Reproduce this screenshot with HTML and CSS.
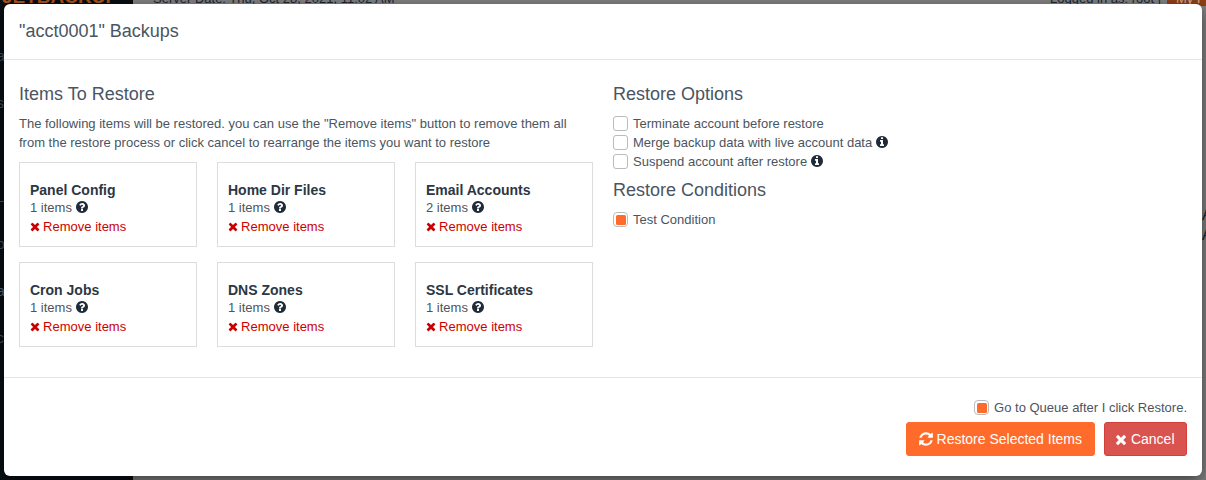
FILE: index.html
```html
<!DOCTYPE html>
<html lang="en">
<head>
<meta charset="utf-8">
<title>Backups</title>
<link rel="stylesheet" href="styles.css">
</head>
<body>
<svg class="defs" width="0" height="0" aria-hidden="true">
  <symbol id="i-times" viewBox="0 0 1408 1792"><path d="M1298 1322q0 40-28 68l-136 136q-28 28-68 28t-68-28l-294-294-294 294q-28 28-68 28t-68-28l-136-136q-28-28-28-68t28-68l294-294-294-294q-28-28-28-68t28-68l136-136q28-28 68-28t68 28l294 294 294-294q28-28 68-28t68 28l136 136q28 28 28 68t-28 68l-294 294 294 294q28 28 28 68z"/></symbol>
  <symbol id="i-question" viewBox="0 0 1792 1792"><path d="M1024 1376v-192q0-14-9-23t-23-9h-192q-14 0-23 9t-9 23v192q0 14 9 23t23 9h192q14 0 23-9t9-23zm256-672q0-88-55.500-163t-138.500-116-170-41q-243 0-371 213-15 24 8 42l132 100q7 6 19 6 16 0 25-12 53-68 86-92 34-24 86-24 48 0 85.500 26t37.500 59q0 38-20 61t-68 45q-63 28-115.500 86.500t-52.500 125.500v36q0 14 9 23t23 9h192q14 0 23-9t9-23q0-19 21.500-49.500t54.500-49.500q32-18 49-28.500t46-35 44.500-48 28-60.500 12.500-81zm384 192q0 209-103 385.500t-279.500 279.500-385.500 103-385.500-103-279.500-279.500-103-385.500 103-385.500 279.500-279.500 385.500-103 385.500 103 279.500 279.500 103 385.500z"/></symbol>
  <symbol id="i-info" viewBox="0 0 1792 1792"><path d="M1152 1376v-160q0-14-9-23t-23-9h-96v-512q0-14-9-23t-23-9h-320q-14 0-23 9t-9 23v160q0 14 9 23t23 9h96v320h-96q-14 0-23 9t-9 23v160q0 14 9 23t23 9h448q14 0 23-9t9-23zm-128-896v-160q0-14-9-23t-23-9h-192q-14 0-23 9t-9 23v160q0 14 9 23t23 9h192q14 0 23-9t9-23zm640 416q0 209-103 385.500t-279.500 279.500-385.500 103-385.500-103-279.500-279.500-103-385.500 103-385.500 279.500-279.500 385.500-103 385.500 103 279.500 279.500 103 385.500z"/></symbol>
  <symbol id="i-refresh" viewBox="0 0 1792 1792"><path d="M1639 1056q0 5-1 7-64 268-268 434.500t-478 166.500q-146 0-282.500-55t-243.500-157l-129 129q-19 19-45 19t-45-19-19-45v-448q0-26 19-45t45-19h448q26 0 45 19t19 45-19 45l-137 137q71 66 161 102t187 36q134 0 250-65t186-179q11-17 53-117 8-23 30-23h192q13 0 22.500 9.500t9.500 22.500zm25-800v448q0 26-19 45t-45 19h-448q-26 0-45-19t-19-45 19-45l138-138q-148-137-349-137-134 0-250 65t-186 179q-11 17-53 117-8 23-30 23h-199q-13 0-22.500-9.500t-9.500-22.500v-7q65-268 270-434.500t480-166.500q146 0 284 55.500t245 156.500l130-129q19-19 45-19t45 19 19 45z"/></symbol>
</svg>

<div class="backdrop">
  <nav class="side">
    <div class="logo-scrap">JETBACKUP</div>
    <div class="side-nav">
      <span>a</span><span>s</span><span>i</span><span>L</span><span>o</span><span class="side-on">a</span><span>c</span>
    </div>
  </nav>
  <div class="server-date">Server Date: Thu, Oct 28, 2021, 11:02 AM</div>
  <div class="logged">Logged in as: root |</div>
  <div class="profile">My Profile</div>
  <div class="edge-scraps"><span>A</span><span>A</span></div>
</div>

<main class="modal">
  <header class="modal-head"><h1 class="modal-title">"acct0001" Backups</h1></header>
  <section class="modal-body">
    <div class="col-items">
      <h2 class="sec-title">Items To Restore</h2>
      <p class="intro">The following items will be restored. you can use the "Remove items" button to remove them all from the restore process or click cancel to rearrange the items you want to restore</p>
      <div class="grid">
        <article class="card">
          <div class="card-name">Panel Config</div>
          <div class="card-count">1 items <svg class="ico ico-q"><use href="#i-question"/></svg></div>
          <a class="card-rm"><svg class="ico ico-x"><use href="#i-times"/></svg> Remove items</a>
        </article>
        <article class="card">
          <div class="card-name">Home Dir Files</div>
          <div class="card-count">1 items <svg class="ico ico-q"><use href="#i-question"/></svg></div>
          <a class="card-rm"><svg class="ico ico-x"><use href="#i-times"/></svg> Remove items</a>
        </article>
        <article class="card">
          <div class="card-name">Email Accounts</div>
          <div class="card-count">2 items <svg class="ico ico-q"><use href="#i-question"/></svg></div>
          <a class="card-rm"><svg class="ico ico-x"><use href="#i-times"/></svg> Remove items</a>
        </article>
        <article class="card">
          <div class="card-name">Cron Jobs</div>
          <div class="card-count">1 items <svg class="ico ico-q"><use href="#i-question"/></svg></div>
          <a class="card-rm"><svg class="ico ico-x"><use href="#i-times"/></svg> Remove items</a>
        </article>
        <article class="card">
          <div class="card-name">DNS Zones</div>
          <div class="card-count">1 items <svg class="ico ico-q"><use href="#i-question"/></svg></div>
          <a class="card-rm"><svg class="ico ico-x"><use href="#i-times"/></svg> Remove items</a>
        </article>
        <article class="card">
          <div class="card-name">SSL Certificates</div>
          <div class="card-count">1 items <svg class="ico ico-q"><use href="#i-question"/></svg></div>
          <a class="card-rm"><svg class="ico ico-x"><use href="#i-times"/></svg> Remove items</a>
        </article>
      </div>
    </div>
    <div class="col-options">
      <h2 class="sec-title">Restore Options</h2>
      <div class="checks">
        <label class="check"><span class="box"></span><span>Terminate account before restore</span></label>
        <label class="check"><span class="box"></span><span>Merge backup data with live account data <svg class="ico ico-i"><use href="#i-info"/></svg></span></label>
        <label class="check"><span class="box"></span><span>Suspend account after restore <svg class="ico ico-i"><use href="#i-info"/></svg></span></label>
      </div>
      <h2 class="sec-title sec-cond">Restore Conditions</h2>
      <label class="check"><span class="box on"></span><span>Test Condition</span></label>
    </div>
  </section>
  <footer class="modal-foot">
    <label class="check check-queue"><span class="box on"></span><span>Go to Queue after I click Restore.</span></label>
    <div class="actions">
      <button class="btn btn-restore"><svg class="ico ico-r"><use href="#i-refresh"/></svg> Restore Selected Items</button>
      <button class="btn btn-cancel"><svg class="ico ico-c"><use href="#i-times"/></svg> Cancel</button>
    </div>
  </footer>
</main>
</body>
</html>
```

FILE: styles.css
```css
* { box-sizing: border-box; }
html, body { margin: 0; height: 100%; }
body {
  position: relative;
  overflow: hidden;
  background: #808080;
  font-family: "Liberation Sans", Arial, sans-serif;
  font-size: 14px;
  color: #4a5561;
  padding: 4px;
}
.defs { position: absolute; }
.ico { display: inline-block; fill: currentColor; vertical-align: -2px; }

.backdrop { position: absolute; inset: 0; overflow: hidden; }
.side { position: absolute; left: 0; top: 0; bottom: 0; width: 133px; background: #080e13; overflow: hidden; }
.logo-scrap { position: absolute; left: 2px; top: -13px; font-size: 19px; line-height: 19px; font-weight: 700; color: #a9521a; white-space: nowrap; }
.side-nav { position: absolute; left: -3px; top: 33px; display: flex; flex-direction: column; font-size: 14px; color: #46525e; }
.side-nav span { height: 47px; line-height: 47px; }
.side-nav .side-on { color: #5b6b7a; }
.server-date { position: absolute; left: 153px; top: -8px; font-size: 13px; line-height: 14px; color: #1b2430; }
.logged { position: absolute; left: 1050px; top: -8px; font-size: 13px; line-height: 14px; color: #1b2430; }
.profile { position: absolute; left: 1167px; right: 0; top: -8px; height: 14px; padding-left: 9px; font-size: 13px; line-height: 14px; color: #d8b098; background: #8f3f12; white-space: nowrap; overflow: hidden; }
.edge-scraps { position: absolute; left: 1202px; top: 205px; display: flex; flex-direction: column; font-size: 16px; line-height: 20px; color: #22272c; }

.modal {
  position: relative;
  width: 1198px;
  height: 472px;
  background: #fff;
  border-radius: 6px;
  box-shadow: 0 5px 15px rgba(0, 0, 0, .5);
  display: flex;
  flex-direction: column;
}
.modal-head { height: 56px; border-bottom: 1px solid #e5e5e5; padding: 15px; }
.modal-title { margin: 0; font-size: 18px; line-height: 25px; font-weight: 400; color: #4a5561; }
.modal-body { height: 318px; border-bottom: 1px solid #e5e5e5; padding: 23px 15px 0; display: flex; }
.col-items { width: 594px; }
.col-options { flex: 1; }
.sec-title { margin: 0; font-size: 18px; line-height: 22px; font-weight: 400; color: #4a5561; }
.intro { margin: 9px 0 0; width: 574px; font-size: 13px; line-height: 19px; color: #4a5561; }
.grid { margin-top: 10px; display: grid; grid-template-columns: repeat(3, 178px); grid-auto-rows: 85px; column-gap: 20px; row-gap: 15px; }
.card { border: 1px solid #ddd; padding: 19px 10px 0; font-size: 13px; }
.card-name { font-weight: 700; font-size: 14px; line-height: 17px; color: #2c3744; }
.card-count { line-height: 17px; color: #4a5561; }
.card-rm { display: block; line-height: 22px; color: #cc0000; }
.ico-q { width: 14px; height: 14px; color: #1f2b38; margin-left: -1px; }
.ico-x { width: 10px; height: 13px; margin-right: -0.5px; vertical-align: -2px; }
.ico-i { width: 14px; height: 14px; color: #1f2b38; margin-left: -1px; }
.checks { margin-top: 9px; }
.check { display: flex; align-items: center; gap: 5px; height: 19px; font-size: 13px; color: #4a5561; }
.box { flex: none; width: 15px; height: 15px; border: 1px solid #bbb; border-radius: 3px; background: #fff; }
.box.on { padding: 1.5px; border-radius: 4px; background: #ff6b2b content-box; }
.sec-cond { margin-top: 8px; margin-bottom: 9px; }
.modal-foot { padding: 14px 15px 0; display: flex; flex-direction: column; align-items: flex-end; }
.check-queue { margin-top: 6px; }
.actions { margin-top: 5px; display: flex; gap: 9px; }
.btn { height: 34px; border-radius: 3px; font: 14px/20px "Liberation Sans", Arial, sans-serif; color: #fff; padding: 0 11.5px; }
.btn-restore { background: #ff6b2b; border: 1px solid #ff6b2b; }
.btn-cancel { background: #d9534f; border: 1px solid #d43f3a; }
.ico-r { width: 16px; height: 16px; margin: 0 -1px; vertical-align: -3px; }
.ico-c { width: 12px; height: 15px; margin-left: -1px; vertical-align: -3px; }
```
